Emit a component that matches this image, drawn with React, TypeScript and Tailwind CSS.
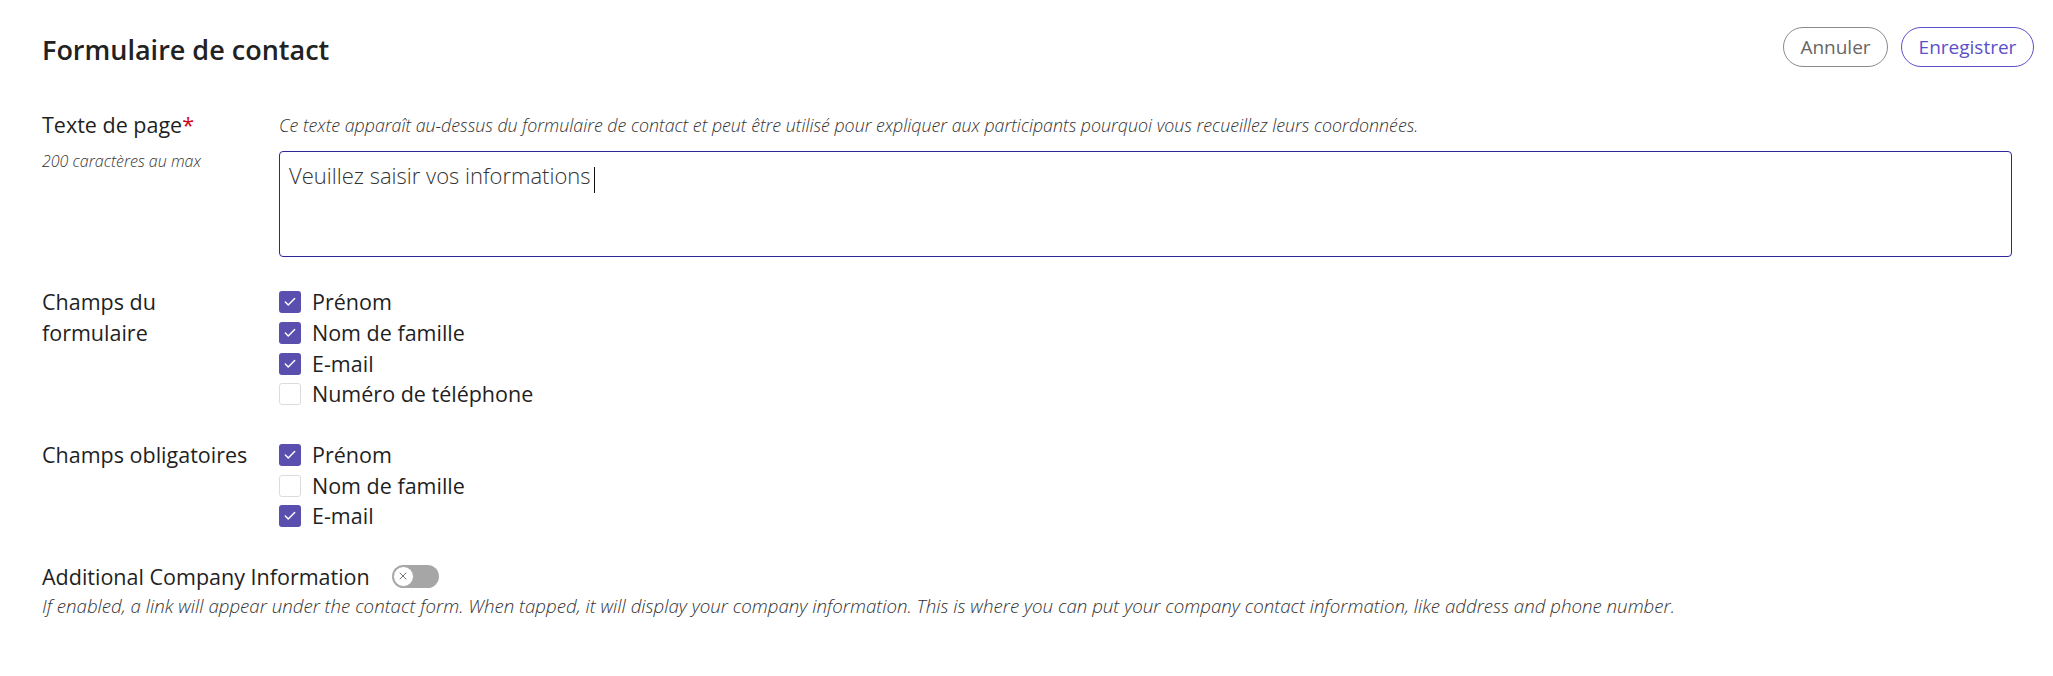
import { Check, X } from "lucide-react";

const fieldOptions = [
  { label: "Prénom", checked: true },
  { label: "Nom de famille", checked: true },
  { label: "E-mail", checked: true },
  { label: "Numéro de téléphone", checked: false },
];

const requiredOptions = [
  { label: "Prénom", checked: true },
  { label: "Nom de famille", checked: false },
  { label: "E-mail", checked: true },
];

function CheckRow({ label, checked }: { label: string; checked: boolean }) {
  return (
    <div className="flex items-center gap-[11px] h-[30.7px]">
      {checked ? (
        <span className="w-[22px] h-[22px] rounded-[3px] bg-[#5a4fae] flex items-center justify-center">
          <Check className="w-[14px] h-[14px] text-white" strokeWidth={2.5} />
        </span>
      ) : (
        <span className="w-[22px] h-[22px] rounded-[3px] border border-[#dcdcdc] bg-white" />
      )}
      <span className="text-[21.5px] text-[#1f1f1f]">{label}</span>
    </div>
  );
}

export default function App() {
  return (
    <div className="w-full min-h-[676px] bg-white text-[#1f1f1f]" style={{ fontFamily: "'Open Sans', sans-serif" }}>
      {/* header */}
      <div className="flex items-center justify-between pl-[42px] pr-[19px] pt-[24px]">
        <h1 className="text-[27px] font-semibold text-[#222] leading-[40px] mt-[6px]">Formulaire de contact</h1>
        <div className="flex gap-[13px]">
          <button className="h-[40px] w-[105px] rounded-full border border-[#8a8a8a] text-[19px] text-[#666]">
            Annuler
          </button>
          <button className="h-[40px] w-[133px] rounded-full border border-[#5b50c8] text-[19px] text-[#5b50c8]">
            Enregistrer
          </button>
        </div>
      </div>

      <div className="pl-[42px] pr-[41px] pt-[40px]">
        {/* page text */}
        <div className="grid grid-cols-[237px_1fr]">
          <div>
            <div className="text-[21.5px] leading-[30px]">
              Texte de page<span className="text-[#d0021b]">*</span>
            </div>
            <div className="text-[16px] italic font-light leading-[20px] mt-[11px] text-[#333]">200 caractères au max</div>
          </div>
          <div>
            <div className="text-[17.8px] italic font-light leading-[30px] text-[#333] whitespace-nowrap">
              Ce texte apparaît au-dessus du formulaire de contact et peut être utilisé pour expliquer aux participants pourquoi vous recueillez leurs coordonnées.
            </div>
            <div className="mt-[11px] h-[106px] rounded-[4px] border border-[#2e279a] px-[9px] pt-[7px]">
              <span className="text-[22px] font-light text-[#333]">Veuillez saisir vos informations</span>
              <span className="inline-block w-[1.5px] h-[26px] bg-[#111] align-middle ml-[3px]" />
            </div>
          </div>
        </div>

        {/* form fields */}
        <div className="grid grid-cols-[237px_1fr] mt-[30px]">
          <div className="text-[21.5px] leading-[30.7px]">
            Champs du
            <br />
            formulaire
          </div>
          <div>
            {fieldOptions.map((o) => (
              <CheckRow key={o.label} label={o.label} checked={o.checked} />
            ))}
          </div>
        </div>

        {/* required fields */}
        <div className="grid grid-cols-[237px_1fr] mt-[30px]">
          <div className="text-[21.5px] leading-[30.7px]">Champs obligatoires</div>
          <div>
            {requiredOptions.map((o) => (
              <CheckRow key={o.label} label={o.label} checked={o.checked} />
            ))}
          </div>
        </div>

        {/* additional company info */}
        <div className="mt-[29px]">
          <div className="flex items-center gap-[22px]">
            <span className="text-[21.5px] leading-[31px]">Additional Company Information</span>
            <span className="relative w-[47px] h-[23px] rounded-full bg-[#a6a6a6]">
              <span className="absolute left-[1px] top-[1px] w-[21px] h-[21px] rounded-full bg-white border border-[#a6a6a6] flex items-center justify-center">
                <X className="w-[12px] h-[12px] text-[#777]" strokeWidth={2} />
              </span>
            </span>
          </div>
          <div className="text-[18.7px] italic font-light leading-[28px] text-[#333] whitespace-nowrap">
            If enabled, a link will appear under the contact form. When tapped, it will display your company information. This is where you can put your company contact information, like address and phone number.
          </div>
        </div>
      </div>
    </div>
  );
}
